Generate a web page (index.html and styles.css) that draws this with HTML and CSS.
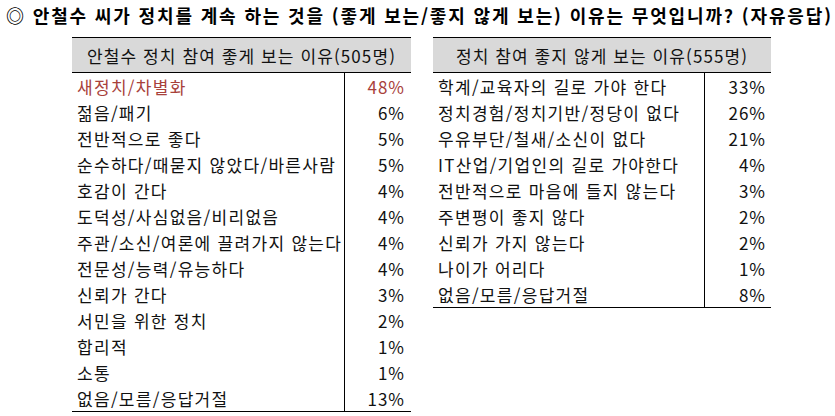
FILE: index.html
```html
<!DOCTYPE html>
<html lang="ko">
<head>
<meta charset="utf-8">
<link rel="stylesheet" href="styles.css">
</head>
<body>
<div class="title">◎ 안철수 씨가 정치를 계속 하는 것을 (좋게 보는/좋지 않게 보는) 이유는 무엇입니까? (자유응답)</div>
<div class="tables">
  <div class="tbl left">
    <div class="hd">안철수 정치 참여 좋게 보는 이유(505명)</div>
    <div class="row hl"><span class="lab">새정치/차별화</span><span class="pct">48%</span></div>
    <div class="row"><span class="lab">젊음/패기</span><span class="pct">6%</span></div>
    <div class="row"><span class="lab">전반적으로 좋다</span><span class="pct">5%</span></div>
    <div class="row"><span class="lab">순수하다/때묻지 않았다/바른사람</span><span class="pct">5%</span></div>
    <div class="row"><span class="lab">호감이 간다</span><span class="pct">4%</span></div>
    <div class="row"><span class="lab">도덕성/사심없음/비리없음</span><span class="pct">4%</span></div>
    <div class="row"><span class="lab">주관/소신/여론에 끌려가지 않는다</span><span class="pct">4%</span></div>
    <div class="row"><span class="lab">전문성/능력/유능하다</span><span class="pct">4%</span></div>
    <div class="row"><span class="lab">신뢰가 간다</span><span class="pct">3%</span></div>
    <div class="row"><span class="lab">서민을 위한 정치</span><span class="pct">2%</span></div>
    <div class="row"><span class="lab">합리적</span><span class="pct">1%</span></div>
    <div class="row"><span class="lab">소통</span><span class="pct">1%</span></div>
    <div class="row"><span class="lab">없음/모름/응답거절</span><span class="pct">13%</span></div>
  </div>
  <div class="tbl right">
    <div class="hd">정치 참여 좋지 않게 보는 이유(555명)</div>
    <div class="row"><span class="lab">학계/교육자의 길로 가야 한다</span><span class="pct">33%</span></div>
    <div class="row"><span class="lab">정치경험/정치기반/정당이 없다</span><span class="pct">26%</span></div>
    <div class="row"><span class="lab">우유부단/철새/소신이 없다</span><span class="pct">21%</span></div>
    <div class="row"><span class="lab">IT산업/기업인의 길로 가야한다</span><span class="pct">4%</span></div>
    <div class="row"><span class="lab">전반적으로 마음에 들지 않는다</span><span class="pct">3%</span></div>
    <div class="row"><span class="lab">주변평이 좋지 않다</span><span class="pct">2%</span></div>
    <div class="row"><span class="lab">신뢰가 가지 않는다</span><span class="pct">2%</span></div>
    <div class="row"><span class="lab">나이가 어리다</span><span class="pct">1%</span></div>
    <div class="row"><span class="lab">없음/모름/응답거절</span><span class="pct">8%</span></div>
  </div>
</div>
</body>
</html>
```
FILE: styles.css
```css
html, body {
  margin: 0;
  padding: 0;
  background: #fff;
}
body {
  width: 835px;
  height: 416px;
  overflow: hidden;
  font-family: "Noto Sans CJK KR", "Noto Sans", sans-serif;
  color: #111;
}
.title {
  height: 37px;
  line-height: 30px;
  padding-left: 6px;
  font-size: 18px;
  font-weight: bold;
  letter-spacing: 1.85px;
  color: #000;
  white-space: nowrap;
}
.tables {
  display: flex;
  align-items: flex-start;
  gap: 22px;
  padding-left: 72px;
}
.tbl {
  border-top: 1px solid #000;
  border-bottom: 1px solid #000;
}
.left { width: 339px; }
.right { width: 338px; }
.hd {
  height: 34px;
  background: #d9d9d9;
  border-bottom: 1px solid #000;
  display: flex;
  align-items: center;
  justify-content: center;
  font-size: 17px;
  letter-spacing: 1.1px;
  color: #111;
}
.row {
  display: flex;
  height: 26px;
  font-size: 17px;
}
.lab {
  flex: 1;
  display: flex;
  align-items: center;
  padding-left: 5px;
  letter-spacing: 1.3px;
  white-space: nowrap;
}
.pct {
  width: 60px;
  border-left: 1px solid #000;
  display: flex;
  align-items: center;
  justify-content: flex-end;
  padding-right: 6px;
  letter-spacing: 1px;
}
.right .pct { width: 61px; padding-right: 5px; }
.hl { color: #a8413b; }
```
